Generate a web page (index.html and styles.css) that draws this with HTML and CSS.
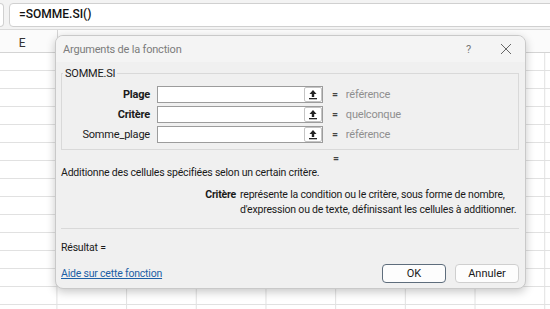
FILE: index.html
```html
<!DOCTYPE html>
<html lang="fr">
<head>
    <meta charset="UTF-8">
    <title>Arguments de la fonction</title>
    <link rel="stylesheet" href="styles.css">
</head>
<body>
    <!-- Formula bar -->
    <div class="formula-bar">
        <div class="name-box"></div>
        <div class="formula-input">=SOMME.SI()</div>
    </div>

    <!-- Sheet -->
    <div class="sheet">
        <div class="col-header">
            <div class="col-name">E</div>
        </div>
        <div class="grid"></div>
    </div>

    <!-- Function arguments dialog -->
    <div class="dialog">
        <div class="dialog-title">
            <span class="title-text">Arguments de la fonction</span>
            <span class="title-help">?</span>
            <span class="title-close">
                <svg width="12" height="12" viewBox="0 0 12 12"><path d="M1 1L11 11M11 1L1 11" stroke="#666" stroke-width="1" fill="none"/></svg>
            </span>
        </div>

        <div class="dialog-body">
            <fieldset class="args">
                <legend>SOMME.SI</legend>
                <div class="arg-row">
                    <label class="arg-label">Plage</label>
                    <div class="arg-input"><span class="ref-btn"><svg width="10" height="11" viewBox="0 0 10 11"><path d="M5 1L1.5 5H3.8V8H6.2V5H8.5Z" fill="#222"/><rect x="1" y="9" width="8" height="1.3" fill="#222"/></svg></span></div>
                    <span class="arg-eq">=</span>
                    <span class="arg-value">référence</span>
                </div>
                <div class="arg-row">
                    <label class="arg-label">Critère</label>
                    <div class="arg-input"><span class="ref-btn"><svg width="10" height="11" viewBox="0 0 10 11"><path d="M5 1L1.5 5H3.8V8H6.2V5H8.5Z" fill="#222"/><rect x="1" y="9" width="8" height="1.3" fill="#222"/></svg></span></div>
                    <span class="arg-eq">=</span>
                    <span class="arg-value">quelconque</span>
                </div>
                <div class="arg-row">
                    <label class="arg-label normal">Somme_plage</label>
                    <div class="arg-input"><span class="ref-btn"><svg width="10" height="11" viewBox="0 0 10 11"><path d="M5 1L1.5 5H3.8V8H6.2V5H8.5Z" fill="#222"/><rect x="1" y="9" width="8" height="1.3" fill="#222"/></svg></span></div>
                    <span class="arg-eq">=</span>
                    <span class="arg-value">référence</span>
                </div>
            </fieldset>

            <div class="result-eq">=</div>
            <p class="summary">Additionne des cellules spécifiées selon un certain critère.</p>

            <div class="arg-help">
                <span class="help-name">Critère</span>
                <span class="help-text">représente la condition ou le critère, sous forme de nombre, d'expression ou de texte, définissant les cellules à additionner.</span>
            </div>

            <div class="result">Résultat =</div>

            <div class="dialog-footer">
                <a href="#" class="help-link">Aide sur cette fonction</a>
                <div class="buttons">
                    <button class="btn btn-ok">OK</button>
                    <button class="btn">Annuler</button>
                </div>
            </div>
        </div>
    </div>
</body>
</html>
```

FILE: styles.css
```css
/* General Styles */
body {
    margin: 0;
    padding: 0;
    font-family: Roboto, "Noto Sans", Arial, sans-serif;
    font-size: 10.5px;
    letter-spacing: -0.2px;
    color: #1a1a1a;
    background-color: #ffffff;
    overflow: hidden;
}

/* Formula bar */
.formula-bar {
    height: 30px;
    background-color: #f3f3f3;
    border-bottom: 1px solid #dadada;
    box-sizing: border-box;
    display: flex;
    align-items: center;
    gap: 5px;
}

.name-box {
    width: 3px;
    height: 22px;
    background-color: #fff;
    border: 1px solid #d0d0d0;
    border-left: none;
    border-radius: 0 4px 4px 0;
}

.formula-input {
    flex: 1;
    height: 22px;
    margin-right: -10px;
    background-color: #fff;
    border: 1px solid #d0d0d0;
    border-radius: 4px;
    padding-left: 9px;
    font-size: 12px;
    font-weight: 500;
    letter-spacing: 0;
    line-height: 21px;
    color: #111;
}

/* Sheet */
.col-header {
    height: 23px;
    background-color: #fbfbfb;
    border-bottom: 1px solid #d4d4d4;
    box-sizing: border-box;
    display: flex;
}

.col-name {
    width: 70px;
    margin-left: -13px;
    text-align: center;
    line-height: 26px;
    font-size: 12px;
    color: #333;
    border-right: 1px solid #d4d4d4;
}

.grid {
    height: 260px;
    background-image:
        linear-gradient(to bottom, transparent 17px, #e1e1e1 17px),
        linear-gradient(to right, transparent 69px, #e1e1e1 69px);
    background-size: 100% 18px, 69.7px 100%;
    background-position: 0 0, -12.3px 0;
}

/* Dialog */
.dialog {
    position: absolute;
    left: 55px;
    top: 35px;
    width: 471px;
    height: 254px;
    background-color: #f0f0f0;
    border: 1px solid #c9c9c9;
    border-radius: 8px;
    box-shadow: 0 3px 10px rgba(0, 0, 0, 0.22);
    box-sizing: border-box;
    overflow: hidden;
}

.dialog-title {
    height: 26px;
    display: flex;
    align-items: center;
    background-color: #f4f4f4;
    padding-left: 7px;
}

.title-text {
    flex: 1;
    font-size: 11px;
    color: #7c7c7c;
}

.title-help {
    font-size: 11px;
    color: #777;
    margin-right: 29px;
}

.title-close {
    display: flex;
    margin-right: 13px;
}

.dialog-body {
    padding: 0 6px 0 5px;
}

/* Arguments group */
.args {
    margin: 5px 0 0 0;
    padding: 4px 0 5px 0;
    border: 1px solid #d9d9d9;
    border-radius: 0;
}

.args legend {
    padding: 0 2px 0 2px;
    margin-left: 1px;
    font-size: 11px;
    color: #1a1a1a;
}

.arg-row {
    display: flex;
    align-items: center;
    height: 20px;
}

.arg-label {
    width: 88px;
    text-align: right;
    font-size: 11px;
    font-weight: bold;
}

.arg-label.normal {
    font-weight: normal;
}

.arg-input {
    width: 166px;
    height: 17px;
    margin-left: 7px;
    background-color: #fff;
    border: 1px solid #9c9c9c;
    box-sizing: border-box;
    display: flex;
    justify-content: flex-end;
}

.ref-btn {
    width: 18px;
    height: 15px;
    border: 1px solid #c4c4c4;
    border-radius: 2px;
    background-color: #fff;
    box-sizing: border-box;
    display: flex;
    align-items: center;
    justify-content: center;
}

.arg-eq {
    margin-left: 9px;
    font-weight: bold;
    color: #444;
}

.arg-value {
    margin-left: 8px;
    font-size: 11px;
    color: #8f8f8f;
}

.result-eq {
    margin: 3px 0 0 272px;
    height: 12px;
    font-weight: bold;
    color: #444;
    line-height: 12px;
}

.summary {
    margin: 0;
    line-height: 16px;
}

.arg-help {
    display: flex;
    margin-top: 6px;
    height: 41px;
    line-height: 15px;
}

.help-name {
    width: 175px;
    text-align: right;
    font-weight: bold;
    flex-shrink: 0;
}

.help-text {
    margin-left: 4px;
    width: 290px;
}

.result {
    border-top: 1px solid #d9d9d9;
    padding-top: 12px;
    height: 23px;
}

.dialog-footer {
    display: flex;
    justify-content: space-between;
    align-items: center;
}

.help-link {
    color: #1c5fa6;
    text-decoration: underline;
}

.buttons {
    display: flex;
    gap: 9px;
}

.btn {
    width: 64px;
    height: 19px;
    padding: 0;
    background-color: #fdfdfd;
    border: 1px solid #cfcfcf;
    border-radius: 4px;
    font-family: Roboto, "Noto Sans", Arial, sans-serif;
    font-size: 11px;
    color: #1a1a1a;
}

.btn-ok {
    border-color: #5e6d7c;
}
```
